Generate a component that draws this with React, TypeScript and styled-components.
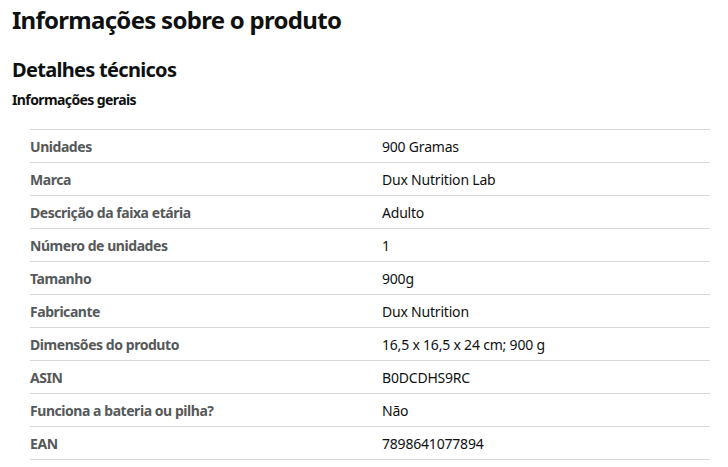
import * as React from 'react'
import styled, { createGlobalStyle } from 'styled-components'

const GlobalStyle = createGlobalStyle`
  body {
    margin: 0;
    background: #ffffff;
    font-family: 'Noto Sans', 'Open Sans', Arial, sans-serif;
    color: #0f1111;
  }
`

const rows: [string, string][] = [
  ['Unidades', '900 Gramas'],
  ['Marca', 'Dux Nutrition Lab'],
  ['Descrição da faixa etária', 'Adulto'],
  ['Número de unidades', '1'],
  ['Tamanho', '900g'],
  ['Fabricante', 'Dux Nutrition'],
  ['Dimensões do produto', '16,5 x 16,5 x 24 cm; 900 g'],
  ['ASIN', 'B0DCDHS9RC'],
  ['Funciona a bateria ou pilha?', 'Não'],
  ['EAN', '7898641077894'],
]

export default function App() {
  return (
    <>
      <GlobalStyle />
      <Page>
        <Title>Informações sobre o produto</Title>
        <Section>Detalhes técnicos</Section>
        <Group>Informações gerais</Group>
        <Table>
          <tbody>
            {rows.map(([label, value]) => (
              <Row key={label}>
                <Label>{label}</Label>
                <Value>{value}</Value>
              </Row>
            ))}
          </tbody>
        </Table>
      </Page>
    </>
  )
}

const Page = styled.div`
  padding: 4px 12px 0 12px;
`

const Title = styled.h1`
  margin: 0;
  font-size: 24px;
  line-height: 32px;
  font-weight: 700;
  letter-spacing: -0.72px;
`

const Section = styled.h2`
  margin: 20px 0 0;
  font-size: 20px;
  line-height: 28px;
  font-weight: 700;
  letter-spacing: -0.7px;
`

const Group = styled.h3`
  margin: 6px 0 0;
  font-size: 14px;
  line-height: 20px;
  font-weight: 700;
  letter-spacing: -0.6px;
`

const Table = styled.table`
  margin: 19px 0 0 18px;
  width: 680px;
  border-collapse: collapse;
  border-top: 1px solid #d5d9d9;
`

const Row = styled.tr`
  border-bottom: 1px solid #d5d9d9;
`

const Label = styled.th`
  width: 352px;
  padding: 7px 0 5px;
  height: 20px;
  text-align: left;
  font-size: 14px;
  line-height: 20px;
  font-weight: 700;
  color: #565959;
  letter-spacing: -0.45px;
`

const Value = styled.td`
  padding: 7px 0 5px;
  font-size: 14px;
  line-height: 20px;
  color: #0f1111;
  letter-spacing: -0.2px;
`
